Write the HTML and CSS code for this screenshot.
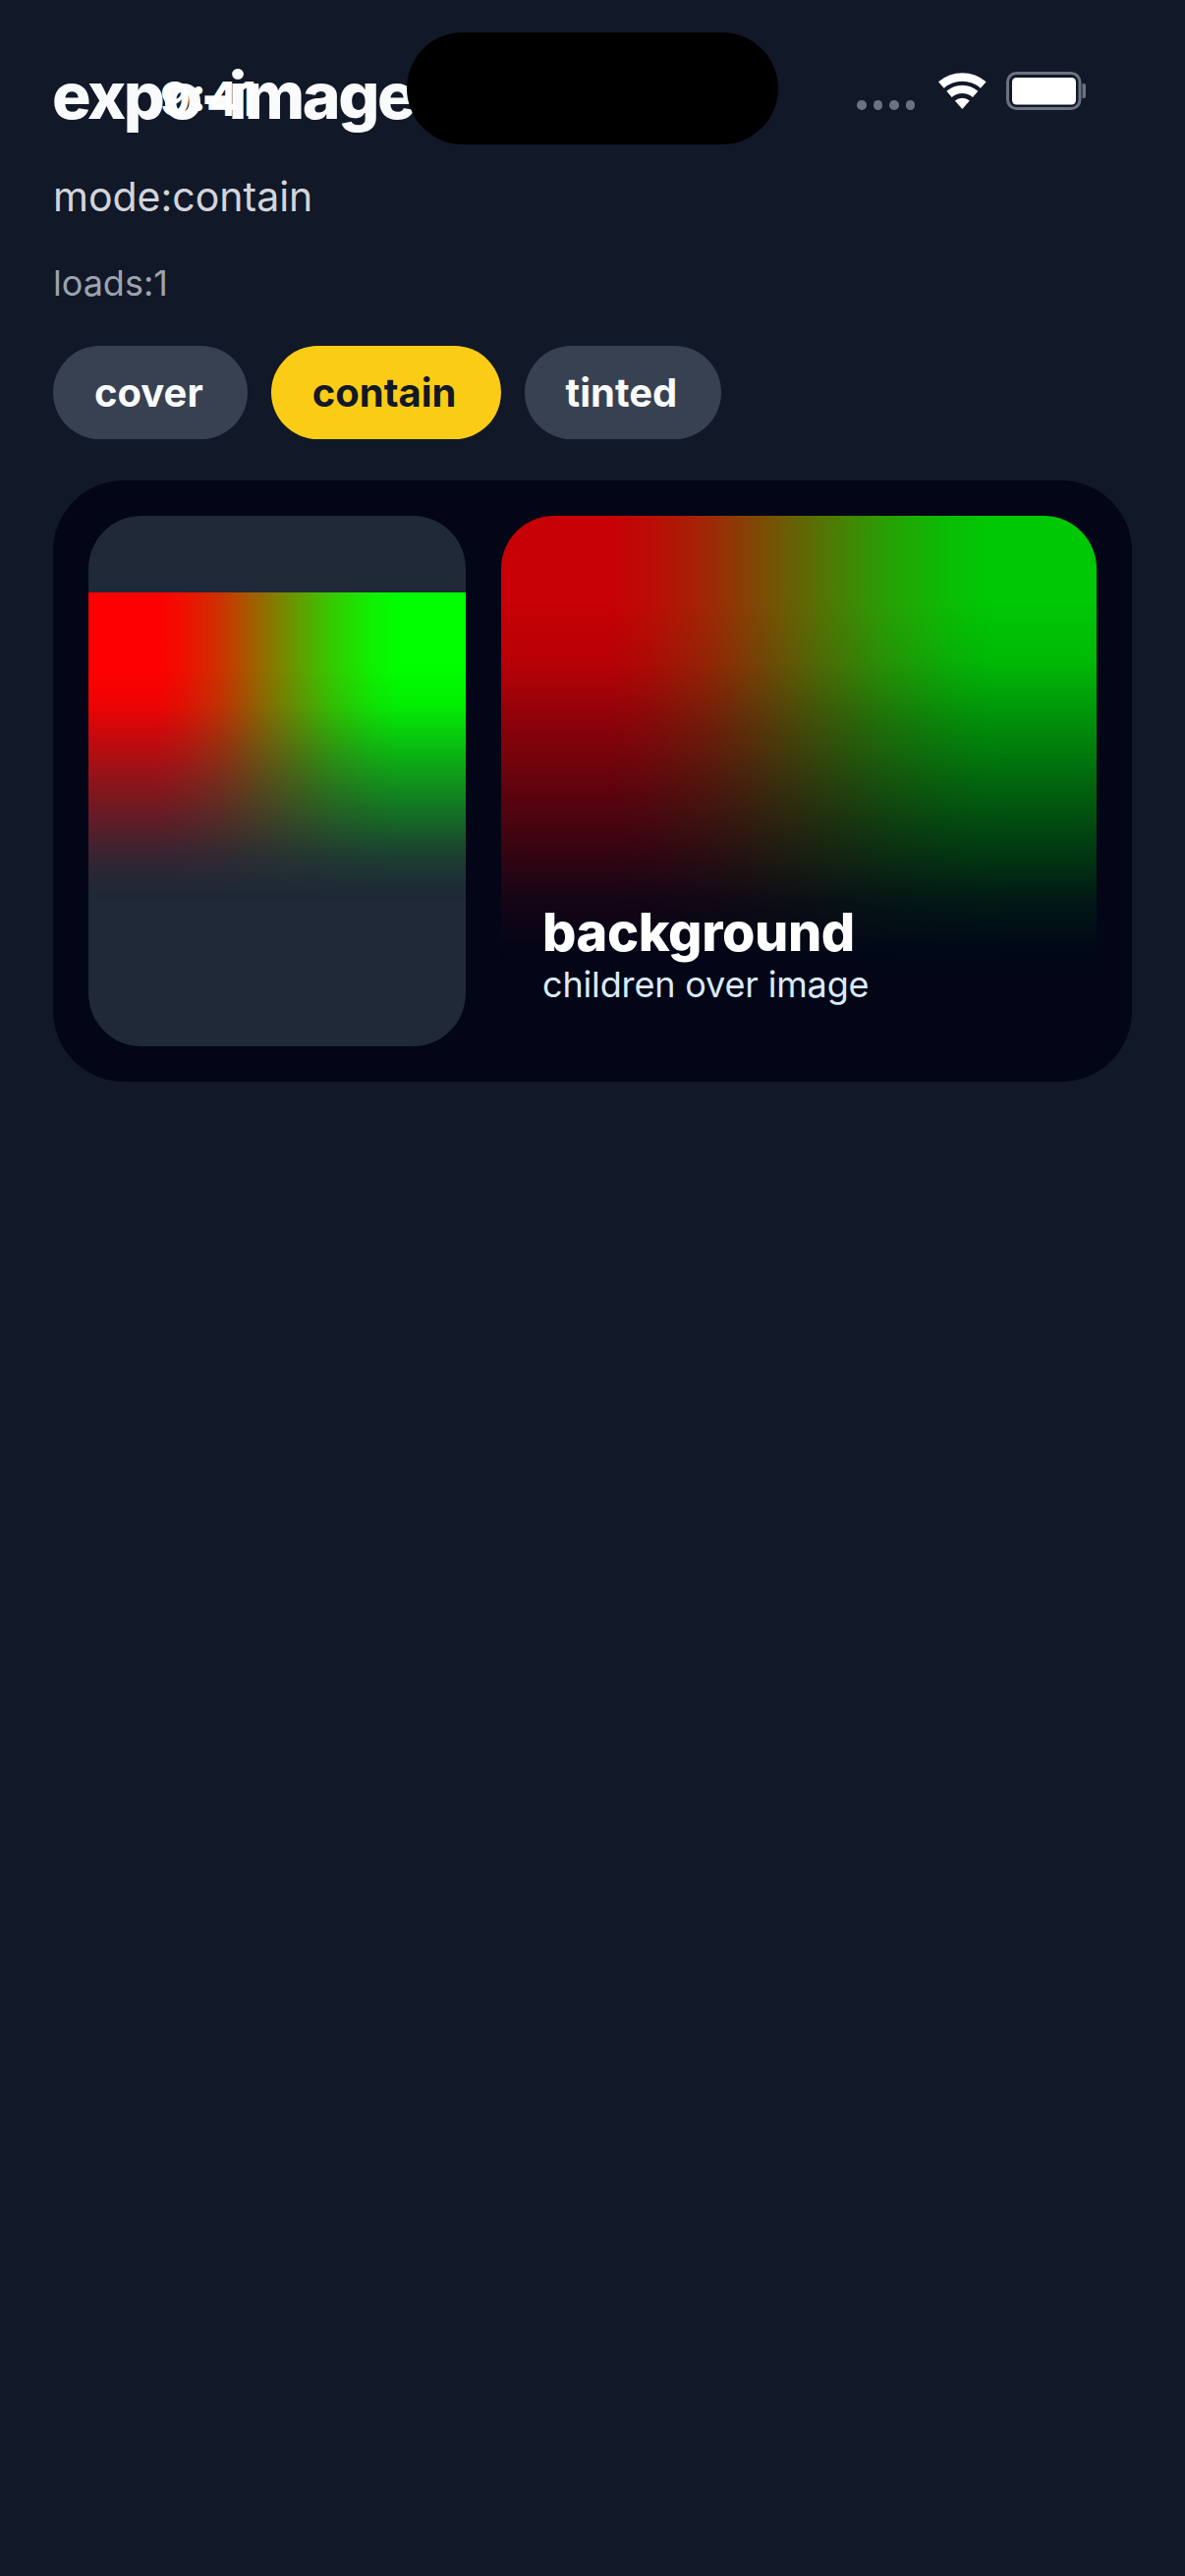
FILE: index.html
```html
<!DOCTYPE html>
<html lang="en">
<head>
<meta charset="utf-8">
<title>expo-image</title>
<link rel="stylesheet" href="styles.css">
</head>
<body>
<div class="statusbar">
  <div class="status-left"><span class="time">9:41</span></div>
  <div class="island"></div>
  <div class="status-right">
    <div class="dots"><i></i><i></i><i></i><i></i></div>
    <svg class="wifi" viewBox="345 72 147 111" aria-hidden="true">
      <path d="M345 100A111 111 0 0 1 491 100L474 119A85 85 0 0 0 362 119Z"/>
      <path d="M370 128A73 73 0 0 1 466 128L450 147A48 48 0 0 0 386 147Z"/>
      <path d="M395.500 157.500A34 34 0 0 1 440.500 157.500L418 183Z"/>
    </svg>
    <svg class="battery" viewBox="0 0 81 39" aria-hidden="true">
      <rect class="battery-shell" x="1.500" y="1.500" width="73.500" height="36" rx="9"/>
      <rect class="battery-fill" x="6" y="6" width="65" height="27.500" rx="4.500"/>
      <path class="battery-cap" d="M77.500 12H79a2 2 0 0 1 2 2V25a2 2 0 0 1-2 2H77.500Z"/>
    </svg>
  </div>
</div>
<main class="screen">
  <h1 class="title">expo-image</h1>
  <p class="mode">mode:contain</p>
  <p class="loads">loads:1</p>
  <div class="pills">
    <div class="pill">cover</div>
    <div class="pill pill-active">contain</div>
    <div class="pill">tinted</div>
  </div>
  <section class="panel">
    <div class="tile tile-contain">
      <div class="picture picture-contain"></div>
    </div>
    <div class="tile tile-bg">
      <div class="picture picture-cover"></div>
      <div class="caption">
        <div class="caption-title">background</div>
        <div class="caption-sub">children over image</div>
      </div>
    </div>
  </section>
</main>
</body>
</html>
```
FILE: styles.css
```css
* { box-sizing: border-box; }
html, body { margin: 0; padding: 0; }
body {
  width: 1206px;
  height: 2622px;
  background: #111827;
  font-family: Inter, "Noto Sans", sans-serif;
  position: relative;
  overflow: hidden;
}
.statusbar {
  position: absolute;
  top: 0;
  left: 0;
  width: 1206px;
  display: grid;
  grid-template-columns: 414px 378px 414px;
  padding-top: 33px;
}
.status-left { display: flex; justify-content: center; padding-left: 10px; }
.time {
  font-size: 48px;
  font-weight: 700;
  line-height: 60px;
  margin-top: 38px;
  color: #fff;
}
.island { height: 114px; border-radius: 57px; background: #000; }
.status-right {
  display: flex;
  align-items: flex-start;
  padding-left: 80px;
  padding-top: 40px;
}
.dots { display: flex; gap: 7px; margin-top: 29px; }
.dots i { width: 9.500px; height: 9.500px; border-radius: 50%; background: #6b7280; display: block; }
.wifi { width: 49px; height: 37px; fill: #fff; margin-left: 23.500px; margin-top: 1px; }
.battery { width: 81px; height: 39px; margin-left: 20px; }
.battery-shell { fill: none; stroke: #6b7280; stroke-width: 3; }
.battery-fill { fill: #fff; }
.battery-cap { fill: #6b7280; }

.screen { padding: 58px 54px 0; }
.title {
  margin: 0 0 0 -1px;
  font-size: 66px;
  line-height: 78px;
  font-weight: 800;
  letter-spacing: -2.400px;
  color: #f9fafb;
}
.mode {
  margin: 37px 0 0;
  font-size: 41px;
  line-height: 54px;
  color: #d1d5db;
}
.loads {
  margin: 37px 0 0;
  font-size: 36px;
  line-height: 48px;
  color: #9ca3af;
}
.pills { display: flex; gap: 24px; margin-top: 40px; }
.pill {
  height: 95px;
  padding: 0 45px 0 42px;
  border-radius: 48px;
  background: #374151;
  color: #f9fafb;
  font-size: 40px;
  font-weight: 700;
  line-height: 95px;
}
.pill-active { background: #facc15; color: #111827; }
.panel {
  margin-top: 42px;
  height: 612px;
  padding: 36px;
  border-radius: 72px;
  background: #020617;
  display: flex;
  gap: 36px;
}
.tile {
  height: 540px;
  border-radius: 54px;
  overflow: hidden;
}
.tile-contain {
  width: 384px;
  background: #1f2937;
  display: flex;
  align-items: center;
}
.tile-bg {
  flex: 1;
  position: relative;
  display: flex;
  flex-direction: column;
  justify-content: flex-end;
}
.picture {
  background: linear-gradient(to right, #f00 18%, rgb(240,15,0) 25%, rgb(204,51,0) 35%, rgb(128,128,0) 50%, rgb(51,204,0) 65%, rgb(15,240,0) 75%, #0f0 82%);
  -webkit-mask-image: linear-gradient(to bottom, #000 20%, rgba(0,0,0,.92) 30%, rgba(0,0,0,.5) 50%, rgba(0,0,0,.1) 70%, rgba(0,0,0,.015) 78%, transparent 82%);
  mask-image: linear-gradient(to bottom, #000 20%, rgba(0,0,0,.92) 30%, rgba(0,0,0,.5) 50%, rgba(0,0,0,.1) 70%, rgba(0,0,0,.015) 78%, transparent 82%);
}
.picture-contain { width: 384px; height: 384px; }
.picture-cover {
  position: absolute;
  left: 0;
  top: -33px;
  width: 606px;
  height: 606px;
  opacity: 0.78;
}
.caption { position: relative; padding: 0 42px 42px; }
.caption-title {
  font-size: 54px;
  line-height: 65px;
  font-weight: 800;
  letter-spacing: -0.400px;
  color: #fff;
}
.caption-sub {
  font-size: 36px;
  line-height: 42px;
  letter-spacing: -0.150px;
  color: #dbeafe;
}
```
